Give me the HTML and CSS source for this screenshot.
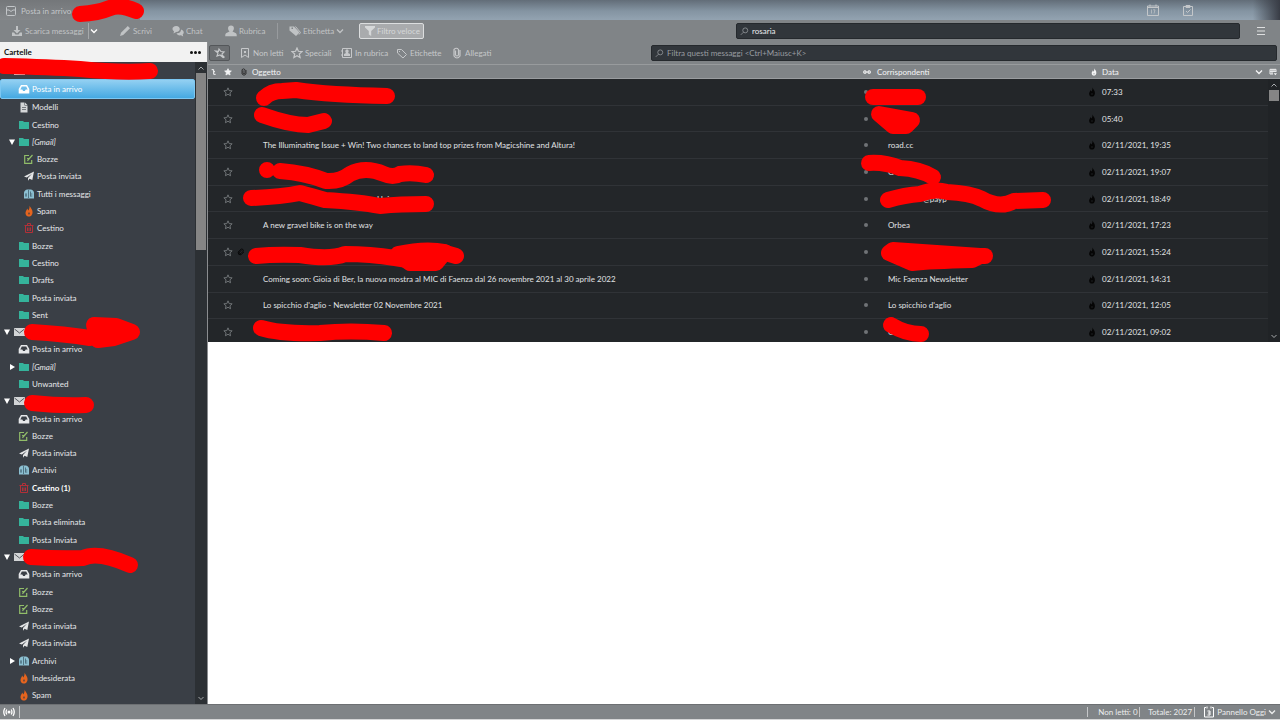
FILE: index.html
```html
<!DOCTYPE html>
<html lang="it">
<head>
<meta charset="utf-8">
<title>Posta in arrivo</title>
<link rel="stylesheet" href="styles.css">
</head>
<body>
<svg class="sprite" aria-hidden="true">
  <symbol id="inbox" viewBox="0 0 12 12"><path fill="currentColor" fill-rule="evenodd" d="M3 2h6l2.300 4v4.500H.7V6zM3.800 3.500 2.300 6.500h2l.8 1.500h1.800l.8-1.500h2L8.200 3.500z"/></symbol>
  <symbol id="tabinbox" viewBox="0 0 12 12"><path fill="none" stroke="currentColor" d="M2.500 1.500h7a1 1 0 0 1 1 1v7a1 1 0 0 1-1 1h-7a1 1 0 0 1-1-1v-7a1 1 0 0 1 1-1zM1.500 5h2.500q2 3 4 0h2.500"/></symbol>
  <symbol id="folder" viewBox="0 0 12 12"><path fill="#35b39b" d="M1 2h4l1 1h5v7H1z"/></symbol>
  <symbol id="doc" viewBox="0 0 12 12"><path fill="#d4d6d8" d="M2.500 1.500h4v3h3v7h-7zM7 1.500 9.500 4H7z"/><path stroke="#777b80" d="M4 6.500h4M4 8.500h4"/></symbol>
  <symbol id="draft" viewBox="0 0 12 12"><path fill="none" stroke="#91bd69" stroke-width="1.200" d="M6 2.500H1.700v7.800h7V7M9.500 2 5.500 6.500 4.300 5.200M5.500 6.500 4.500 8"/></symbol>
  <symbol id="sent" viewBox="0 0 12 12"><path fill="#e5e6e7" d="M11 1.500 9.300 10 6.500 8.700 5 10.700V8L9 3.700 3.800 7.500 1 6.500z"/></symbol>
  <symbol id="archive" viewBox="0 0 12 12"><path fill="#8cc0d2" d="M1 10.500V5Q1 2.500 4 1.500h4q3 1 3 3.500v5.500z"/><path fill="none" stroke="#42616e" stroke-width=".8" d="M5.500 2v8M7.500 3.500v5M3 5v4M7.500 6h1.800M7.500 8h1.800M2 7h2"/></symbol>
  <symbol id="flame" viewBox="0 0 12 12"><path fill="currentColor" fill-rule="evenodd" d="M6.500.5C7.500 3 10 4.500 9.500 8 9 11 7 11.500 6 11.500S2.500 11 2.500 8C2.500 6 4 5 4.200 3.500L5.300 5.500C6.500 4 6.700 2 6.500.5zM6 7Q4.500 8.500 6 10 7.500 8.500 6 7z"/></symbol>
  <symbol id="trash" viewBox="0 0 12 12"><path fill="none" stroke="#b23038" d="M1.500 3.500h9M4.500 3V1.500h3V3M2.500 4v6.500h7V4M4.500 5.500V9M6 5.500V9M7.500 5.500V9"/></symbol>
  <symbol id="mail" viewBox="0 0 12 12"><path fill="#d2d4d6" d="M1 2h11v8H1z"/><path fill="none" stroke="#555a60" d="M1.500 3 6.500 7l5-4"/></symbol>
  <symbol id="down" viewBox="0 0 8 8"><path fill="#fff" d="M1 1.500h6L4 7z"/></symbol>
  <symbol id="right" viewBox="0 0 8 8"><path fill="#fff" d="M2 1v6l5-3z"/></symbol>
  <symbol id="chev" viewBox="0 0 8 8"><path fill="none" stroke="currentColor" stroke-width="1.300" d="m1 2.500 3 3 3-3"/></symbol>
  <symbol id="chevthin" viewBox="0 0 8 8"><path fill="none" stroke="currentColor" d="m1.500 3 2.500 2.500L6.500 3"/></symbol>
  <symbol id="chevup" viewBox="0 0 8 8"><path fill="none" stroke="currentColor" d="M1.500 5.500 4 3l2.500 2.500"/></symbol>
  <symbol id="download" viewBox="0 0 12 12"><path fill="currentColor" d="M5 1h2v4h2.500L6 8.500 2.500 5H5zM1 7.500h2l1.500 2h3l1.500-2h2V11H1z"/></symbol>
  <symbol id="pencil" viewBox="0 0 12 12"><path fill="currentColor" d="m1 11 1-3.200L8.800 1 11 3.200 4.200 10z"/></symbol>
  <symbol id="chat" viewBox="0 0 12 12"><path fill="currentColor" d="M4.200 1C9 1 9 7 4.200 7L1.500 8.500 2 6.300C-.8 4.500.5 1 4.200 1z"/><path fill="currentColor" d="M9 4.500c3 .8 3.500 3.500 1.700 5l.5 2L9 10.300c-2.500.4-4-.6-4.500-2C7.500 8.500 9 7 9 4.500z"/></symbol>
  <symbol id="person" viewBox="0 0 12 12"><path fill="currentColor" d="M6 .5c4 0 3.200 4.500 1.500 6L11 8.200q.8.500.8 3H.2q0-2.500.8-3l3.500-1.700C2.800 5 2 .5 6 .5z"/></symbol>
  <symbol id="tag" viewBox="0 0 12 12"><path fill="currentColor" fill-rule="evenodd" d="M.5 1.500H5l5.500 6L7 11 .5 5.500zM2.500 2.500v1.500H4V2.500z"/><path fill="none" stroke="currentColor" d="m6.500 1.500 5 6-1.500 2"/></symbol>
  <symbol id="tago" viewBox="0 0 12 12"><path fill="none" stroke="currentColor" d="M1.500 2.500h4l5 5-3.500 3.500-5.500-5zM3.500 4v1"/></symbol>
  <symbol id="funnel" viewBox="0 0 12 12"><path fill="currentColor" d="M1 1h10v1.500L7.200 6v5L4.800 9.500V6L1 2.500z"/></symbol>
  <symbol id="search" viewBox="0 0 12 12"><circle cx="7" cy="4.500" r="3.300" fill="none" stroke="currentColor"/><path stroke="currentColor" d="M4.500 7 1 10.500"/></symbol>
  <symbol id="star" viewBox="0 0 12 12"><path stroke="currentColor" stroke-width="1.200" d="m6 1 1.400 3.300 3.600.3-2.700 2.400.8 3.500L6 8.700l-3.100 1.800.8-3.500L1 4.600l3.600-.3z"/></symbol>
  <symbol id="pin" viewBox="0 0 12 12"><path fill="none" stroke="currentColor" stroke-width="1.200" d="M5 2 7 4.500l3 .5-2 2 .5 3L6 8 3 9l1-3-2.500-2 3 .3zM7.500 7.500l3 3"/></symbol>
  <symbol id="unread" viewBox="0 0 12 12"><path fill="none" stroke="currentColor" d="M2.500 1.500h7v9L6 8l-3.500 2.500z"/><path fill="currentColor" d="M5 4h2v2H5z"/></symbol>
  <symbol id="book" viewBox="0 0 12 12"><path fill="none" stroke="currentColor" d="M1.500 1.500h9v9h-9zM0 4h2M0 8h2"/><path fill="currentColor" d="M6 2.500c2 0 2 2.500 1 3.500l2 1v2H3V7l2-1C4 5 4 2.500 6 2.500z"/></symbol>
  <symbol id="clip" viewBox="0 0 12 12"><path fill="none" stroke="currentColor" stroke-width="1.200" d="M4.500 3.500V8q1.500 2 3 0V2.500q-2-2.500-4.500 0V9q3 4 6 0V3"/></symbol>
  <symbol id="glasses" viewBox="0 0 12 12"><path fill="none" stroke="currentColor" stroke-width="1.600" d="M2.800 4.200a1.800 1.800 0 1 0 .1 0zM9.200 4.200a1.800 1.800 0 1 0 .1 0zM4.500 6h3"/></symbol>
  <symbol id="thread" viewBox="0 0 12 12"><path fill="none" stroke="currentColor" stroke-width="1.500" d="M1 2.500h3v7h3M4 5.500h2"/></symbol>
  <symbol id="columns" viewBox="0 0 12 12"><path fill="none" stroke="currentColor" stroke-width="1.400" d="M10.500 6V2h-9v7H6M1.500 5h9M4.500 2v7M7.500 2v4"/><path fill="currentColor" d="M7 8h5l-2.500 3z"/></symbol>
  <symbol id="calendar" viewBox="0 0 12 12"><path fill="none" stroke="currentColor" d="M.5 2h11v9.500H.5zM.5 3.500h11M3 .5v2M9 .5v2"/><path fill="none" stroke="currentColor" stroke-width=".7" d="M4.500 5.500v4M6 5.800h2l-1 3.700"/></symbol>
  <symbol id="tasks" viewBox="0 0 12 12"><path fill="none" stroke="currentColor" d="M1.500 2.500h9v9h-9zM4 1.500h4v2H4zM4 7l1.500 1.500L8.500 5.500"/></symbol>
  <symbol id="menu" viewBox="0 0 12 12"><path stroke="currentColor" stroke-width="1.200" d="M2 2.500h8M2 6h8M2 9.500h8"/></symbol>
  <symbol id="signal" viewBox="0 0 12 12"><circle cx="6" cy="6" r="1.500" fill="#fff"/><path fill="none" stroke="#fff" stroke-width="1.300" d="M3.800 3.500q-1.500 2.500 0 5M8.200 3.500q1.500 2.500 0 5M2 2q-2.500 4 0 8M10 2q2.500 4 0 8"/></symbol>
  <symbol id="today" viewBox="0 0 12 12"><path fill="none" stroke="#fff" d="M3 1.500H1.500v9.500h9V1.500H9M4 .5v2M8 .5v2M4.500 5H7v4H4.500M5 7h2"/></symbol>
</svg>

<div class="app">
  <nav class="tabs">
    <button class="tab"><svg class="i"><use href="#tabinbox"/></svg>Posta in arrivo</button>
    <button class="tabicon" aria-label="Calendario"><svg class="i"><use href="#calendar"/></svg></button>
    <button class="tabicon" aria-label="Attività"><svg class="i"><use href="#tasks"/></svg></button>
  </nav>

  <header class="toolbar">
    <button class="tool w-get"><svg class="i"><use href="#download"/></svg>Scarica messaggi</button>
    <button class="tool more" aria-label="Opzioni"><svg class="s"><use href="#chev"/></svg></button>
    <button class="tool w-short"><svg class="i"><use href="#pencil"/></svg>Scrivi</button>
    <button class="tool w-short"><svg class="i"><use href="#chat"/></svg>Chat</button>
    <button class="tool w-book"><svg class="i"><use href="#person"/></svg>Rubrica</button>
    <button class="tool w-tag"><svg class="i"><use href="#tag"/></svg>Etichetta<svg class="s"><use href="#chev"/></svg></button>
    <button class="tool pressed"><svg class="i"><use href="#funnel"/></svg>Filtro veloce</button>
    <label class="field global"><svg class="i"><use href="#search"/></svg><input type="text" value="rosaria" aria-label="Cerca"></label>
    <button class="tool menu" aria-label="Menu"><svg class="i"><use href="#menu"/></svg></button>
  </header>

  <div class="body">
    <aside class="side">
      <div class="sidehead">Cartelle<button class="dots" aria-label="Opzioni cartelle"><i></i><i></i><i></i></button></div>
      <div class="sidebody">
        <ul class="tree">
          <li class="acc"><svg class="s"></svg><svg class="i"><use href="#mail"/></svg></li>
          <li class="sel"><svg class="i"><use href="#inbox"/></svg>Posta in arrivo</li>
          <li><svg class="i"><use href="#doc"/></svg>Modelli</li>
          <li><svg class="i"><use href="#folder"/></svg>Cestino</li>
          <li class="open it"><svg class="s"><use href="#down"/></svg><svg class="i"><use href="#folder"/></svg>[Gmail]</li>
          <li class="sub"><svg class="i"><use href="#draft"/></svg>Bozze</li>
          <li class="sub"><svg class="i"><use href="#sent"/></svg>Posta inviata</li>
          <li class="sub"><svg class="i"><use href="#archive"/></svg>Tutti i messaggi</li>
          <li class="sub"><svg class="i spam"><use href="#flame"/></svg>Spam</li>
          <li class="sub"><svg class="i"><use href="#trash"/></svg>Cestino</li>
          <li><svg class="i"><use href="#folder"/></svg>Bozze</li>
          <li><svg class="i"><use href="#folder"/></svg>Cestino</li>
          <li><svg class="i"><use href="#folder"/></svg>Drafts</li>
          <li><svg class="i"><use href="#folder"/></svg>Posta inviata</li>
          <li><svg class="i"><use href="#folder"/></svg>Sent</li>
          <li class="acc"><svg class="s"><use href="#down"/></svg><svg class="i"><use href="#mail"/></svg></li>
          <li><svg class="i"><use href="#inbox"/></svg>Posta in arrivo</li>
          <li class="open it"><svg class="s"><use href="#right"/></svg><svg class="i"><use href="#folder"/></svg>[Gmail]</li>
          <li><svg class="i"><use href="#folder"/></svg>Unwanted</li>
          <li class="acc"><svg class="s"><use href="#down"/></svg><svg class="i"><use href="#mail"/></svg></li>
          <li><svg class="i"><use href="#inbox"/></svg>Posta in arrivo</li>
          <li><svg class="i"><use href="#draft"/></svg>Bozze</li>
          <li><svg class="i"><use href="#sent"/></svg>Posta inviata</li>
          <li><svg class="i"><use href="#archive"/></svg>Archivi</li>
          <li class="new"><svg class="i"><use href="#trash"/></svg>Cestino (1)</li>
          <li><svg class="i"><use href="#folder"/></svg>Bozze</li>
          <li><svg class="i"><use href="#folder"/></svg>Posta eliminata</li>
          <li><svg class="i"><use href="#folder"/></svg>Posta Inviata</li>
          <li class="acc"><svg class="s"><use href="#down"/></svg><svg class="i"><use href="#mail"/></svg></li>
          <li><svg class="i"><use href="#inbox"/></svg>Posta in arrivo</li>
          <li><svg class="i"><use href="#draft"/></svg>Bozze</li>
          <li><svg class="i"><use href="#draft"/></svg>Bozze</li>
          <li><svg class="i"><use href="#sent"/></svg>Posta inviata</li>
          <li><svg class="i"><use href="#sent"/></svg>Posta inviata</li>
          <li class="open"><svg class="s"><use href="#right"/></svg><svg class="i"><use href="#archive"/></svg>Archivi</li>
          <li><svg class="i spam"><use href="#flame"/></svg>Indesiderata</li>
          <li><svg class="i spam"><use href="#flame"/></svg>Spam</li>
        </ul>
        <div class="scroll"><svg class="s"><use href="#chevup"/></svg><div class="thumb"></div><svg class="s end"><use href="#chevthin"/></svg></div>
      </div>
    </aside>

    <main class="main">
      <div class="filter">
        <button class="pin" aria-label="Mantieni filtro"><svg class="i"><use href="#pin"/></svg></button>
        <button class="tool f1"><svg class="i"><use href="#unread"/></svg>Non letti</button>
        <button class="tool f2"><svg class="i" fill="none"><use href="#star"/></svg>Speciali</button>
        <button class="tool f3"><svg class="i"><use href="#book"/></svg>In rubrica</button>
        <button class="tool f3"><svg class="i"><use href="#tago"/></svg>Etichette</button>
        <button class="tool f4"><svg class="i"><use href="#clip"/></svg>Allegati</button>
        <label class="field quick"><svg class="i"><use href="#search"/></svg><input type="text" placeholder="Filtra questi messaggi &lt;Ctrl+Maiusc+K&gt;" aria-label="Filtra questi messaggi"></label>
      </div>
      <div class="list">
        <table class="mails">
          <colgroup><col class="c1"><col class="c2"><col class="c3"><col><col class="c5"><col class="c6"><col class="c7"><col class="c8"><col class="c9"></colgroup>
          <thead><tr>
            <th><svg class="s"><use href="#thread"/></svg></th><th><svg class="s" fill="currentColor"><use href="#star"/></svg></th><th><svg class="s dark"><use href="#clip"/></svg></th><th class="h-subj">Oggetto</th>
            <th><svg class="s"><use href="#glasses"/></svg></th><th class="h-who">Corrispondenti</th><th><svg class="s"><use href="#flame"/></svg></th><th>Data</th><th><span class="ends"><svg class="s"><use href="#chev"/></svg><svg class="s"><use href="#columns"/></svg></span></th>
          </tr></thead>
          <tbody>
            <tr><td></td><td><svg class="st"><use href="#star"/></svg></td><td></td><td></td><td><i class="dot"></i></td><td></td><td><svg class="fl"><use href="#flame"/></svg></td><td colspan="2">07:33</td></tr>
            <tr><td></td><td><svg class="st"><use href="#star"/></svg></td><td></td><td></td><td><i class="dot"></i></td><td></td><td><svg class="fl"><use href="#flame"/></svg></td><td colspan="2">05:40</td></tr>
            <tr><td></td><td><svg class="st"><use href="#star"/></svg></td><td></td><td>The Illuminating Issue + Win! Two chances to land top prizes from Magicshine and Altura!</td><td><i class="dot"></i></td><td>road.cc</td><td><svg class="fl"><use href="#flame"/></svg></td><td colspan="2">02/11/2021, 19:35</td></tr>
            <tr><td></td><td><svg class="st"><use href="#star"/></svg></td><td></td><td></td><td><i class="dot"></i></td><td>G</td><td><svg class="fl"><use href="#flame"/></svg></td><td colspan="2">02/11/2021, 19:07</td></tr>
            <tr><td></td><td><svg class="st"><use href="#star"/></svg></td><td></td><td class="p-subj">a Uni</td><td><i class="dot"></i></td><td class="p-who">@payp</td><td><svg class="fl"><use href="#flame"/></svg></td><td colspan="2">02/11/2021, 18:49</td></tr>
            <tr><td></td><td><svg class="st"><use href="#star"/></svg></td><td></td><td>A new gravel bike is on the way</td><td><i class="dot"></i></td><td>Orbea</td><td><svg class="fl"><use href="#flame"/></svg></td><td colspan="2">02/11/2021, 17:23</td></tr>
            <tr><td></td><td><svg class="st"><use href="#star"/></svg></td><td><svg class="s att"><use href="#clip"/></svg></td><td></td><td><i class="dot"></i></td><td></td><td><svg class="fl"><use href="#flame"/></svg></td><td colspan="2">02/11/2021, 15:24</td></tr>
            <tr><td></td><td><svg class="st"><use href="#star"/></svg></td><td></td><td>Coming soon: Gioia di Ber, la nuova mostra al MIC di Faenza dal 26 novembre 2021 al 30 aprile 2022</td><td><i class="dot"></i></td><td>Mic Faenza Newsletter</td><td><svg class="fl"><use href="#flame"/></svg></td><td colspan="2">02/11/2021, 14:31</td></tr>
            <tr><td></td><td><svg class="st"><use href="#star"/></svg></td><td></td><td>Lo spicchio d'aglio - Newsletter 02 Novembre 2021</td><td><i class="dot"></i></td><td>Lo spicchio d'aglio</td><td><svg class="fl"><use href="#flame"/></svg></td><td colspan="2">02/11/2021, 12:05</td></tr>
            <tr><td></td><td><svg class="st"><use href="#star"/></svg></td><td></td><td></td><td><i class="dot"></i></td><td>G</td><td><svg class="fl"><use href="#flame"/></svg></td><td colspan="2">02/11/2021, 09:02</td></tr>
          </tbody>
        </table>
        <div class="scroll lscroll"><svg class="s"><use href="#chevup"/></svg><div class="thumb"></div><svg class="s end"><use href="#chevthin"/></svg></div>
      </div>
      <div class="preview"></div>
    </main>
  </div>

  <footer class="status">
    <span class="online"><svg class="i"><use href="#signal"/></svg></span>
    <span class="count n1">Non letti: 0</span><span class="count n2">Totale: 2027</span>
    <button class="today"><svg class="i"><use href="#today"/></svg>Pannello Oggi<svg class="s"><use href="#chev"/></svg></button>
  </footer>
</div>

<svg class="marks" viewBox="0 0 1280 720" aria-hidden="true">
  <g fill="none" stroke="#f00" stroke-width="16" stroke-linecap="round" stroke-linejoin="round">
    <path d="M80 14Q98 13 110 8Q120 4 136 11"/>
    <path d="M4 66Q50 67 80 69Q120 73 150 71"/>
    <path d="M264 98Q271 91 282 91L296 90Q330 95 387 96"/>
    <path d="M262 115Q290 125 308 125L324 121"/>
    <path d="M267 170h0M280 171Q306 173 326 181Q340 182 350 174Q365 166 384 174Q393 178 400 174Q412 172 426 175"/>
    <path d="M251 198Q280 197 300 193Q315 197 325 200Q360 202 380 206Q400 204 426 204"/>
    <path d="M256 256Q275 254 300 255Q330 260 345 254Q370 254 395 258L420 262L442 252L456 256"/>
    <path fill="#f00" d="M398 254Q425 248 445 252L436 263H410z"/>
    <path d="M261 328Q280 334 320 333Q350 330 384 333"/>
    <path d="M873 97H918"/>
    <path fill="#f00" d="M879 114 912 120 906 126 893 126z"/>
    <path d="M869 163Q885 162 900 168Q920 169 933 177"/>
    <path d="M888 200Q905 195 920 194Q935 188 947 192Q970 193 982 199Q1000 209 1014 201L1043 200"/>
    <path fill="#f00" d="M889 253 893 250 980 256 972 260Q930 261 912 263z"/><path d="M975 256h10"/>
    <path d="M891 325Q906 334 921 334"/>
    <path d="M32 332Q65 334 90 338L100 328"/><path fill="#f00" d="M94 325 116 326 132 332 114 338 98 340z"/>
    <path d="M32 403Q60 406 86 405"/>
    <path d="M31 557Q60 559 83 558Q98 551 130 565"/>
  </g>
</svg>
</body>
</html>
```
FILE: styles.css
```css
* { box-sizing: border-box; }
body { margin: 0; font-family: Lato, "Noto Sans", sans-serif; font-size: 8px; line-height: 12px; color: #e6e8ea; }
button, input { font: inherit; color: inherit; border: 0; background: none; padding: 0; margin: 0; }
ul { margin: 0; padding: 0; list-style: none; }
.sprite { display: none; }
.i { width: 12px; height: 12px; flex: none; }
.s { width: 8px; height: 8px; flex: none; display: block; }
.app { display: flex; flex-direction: column; height: 100vh; background: #808487; }

.tabs { display: flex; height: 20px; flex: none; background: linear-gradient(90deg, transparent 92%, #383c45 100%) right / 340px no-repeat, linear-gradient(#626d78, #8494a2 55%, #93a3b1); color: #c3c6c9; }
.tab { display: flex; align-items: center; gap: 4px; width: 140px; padding: 1px 0 0 5px; margin-right: auto; background: linear-gradient(#74777a, #84878a); }
.tabicon { width: 35px; display: flex; align-items: center; }
.tabicon:last-child { width: 98px; }

.toolbar { display: flex; align-items: center; height: 22px; flex: none; padding: 0 13px 0 11px; color: #c0c3c5; }
.tool { display: flex; align-items: center; gap: 2px; height: 16px; white-space: nowrap; text-align: left; flex: none; }
.w-get { width: 78px; border-right: 1px solid #a5a8aa; }
.more { width: 30px; padding-left: 1px; color: #fff; }
.w-short { width: 53px; }
.w-book { width: 53px; border-right: 1px solid #989b9e; }
.w-tag { width: 81px; padding-left: 11px; gap: 2px; }
.pressed { width: 65px; padding-left: 4px; gap: 1px; background: #a9abad; border: 1px solid #dcdedf; border-radius: 2px; color: #d6d8d9; }
.field { display: flex; align-items: center; gap: 3px; height: 16px; padding: 0 3px; background: #31363b; border: 1px solid #25292d; border-radius: 2px; color: #999da1; }
.field .i { width: 9px; height: 9px; }
.field input { flex: 1; min-width: 0; outline: 0; color: #eceef0; }
.field input::placeholder { color: #999da1; opacity: 1; }
.global { width: 504px; margin-left: auto; }
.menu { width: 27px; padding-left: 15px; color: #dedfe0; }

.body { display: flex; flex: 1; min-height: 0; }
.side { width: 208px; flex: none; display: flex; flex-direction: column; background: #3a3f46; border-right: 1px solid #8b8d90; }
.sidehead { display: flex; align-items: center; justify-content: space-between; height: 20px; flex: none; padding: 0 6px 0 4px; background: #f2f2f2; color: #111; font-weight: 700; }
.dots { display: flex; gap: 1px; }
.dots i { width: 3px; height: 3px; border-radius: 50%; background: #111; }
.sidebody { display: flex; flex: 1; min-height: 0; }
.tree { flex: 1; display: flex; flex-direction: column; }
.tree li { flex: 1; min-height: 0; display: flex; align-items: center; gap: 2px; padding-left: 18px; border-radius: 2px; white-space: nowrap; }
.tree .sub { padding-left: 23px; }
.tree .open { padding-left: 8px; }
.tree .acc { padding-left: 3px; }
.tree .it { font-style: italic; }
.tree .new { font-weight: 700; color: #fff; }
.tree .sel { background: linear-gradient(#93d0f2, #45a9e2); border: 1px solid #7cc7f2; padding-left: 17px; color: #fff; }
.spam { color: #e5641e; }
.scroll { width: 12px; flex: none; display: flex; flex-direction: column; align-items: center; background: #2c3034; color: #a7aaac; padding: 2px 0; }
.thumb { width: 10px; height: 177px; margin-top: 1px; background: #858585; }
.end { margin-top: auto; }

.main { flex: 1; min-width: 0; display: flex; flex-direction: column; background: #808487; }
.filter { display: flex; align-items: center; height: 22px; flex: none; padding: 0 3px 0 1px; color: #c6c8ca; }
.pin { width: 21px; height: 16px; display: flex; align-items: center; justify-content: center; background: #6c6f72; border: 1px solid #54575a; border-radius: 2px; margin-right: 9px; }
.f1 { width: 52px; }
.f2 { width: 50px; }
.f3 { width: 55px; }
.f4 { width: 60px; }
.quick { flex: 1; margin-left: 140px; }
.list { display: flex; height: 278px; flex: none; overflow: hidden; position: relative; background: #232629; }
.mails { width: 100%; height: 282px; border-collapse: collapse; table-layout: fixed; color: #e0e2e4; flex: none; }
.c1 { width: 13px; } .c2 { width: 16px; } .c3 { width: 26px; } .c5 { width: 25px; } .c6 { width: 199px; } .c7 { width: 15px; } .c8 { width: 153px; } .c9 { width: 25px; }
th, td { padding: 0; text-align: left; font-weight: 400; white-space: nowrap; vertical-align: middle; }
th { height: 14px; background: #808487; border-top: 1px solid #989b9d; border-bottom: 1px solid #9a9da0; color: #f4f5f6; }
th:first-child, .mails th:nth-child(2), .mails th:nth-child(3), .mails th:nth-child(7) { padding-left: 3px; }
.h-subj, .h-who { text-indent: -11px; }
.ends { display: flex; gap: 6px; }
.dark { color: #222; }
tbody tr { border-bottom: 1px solid #303337; }
.st { width: 10px; height: 10px; display: block; margin-left: 2px; fill: none; color: #6f7376; }
.dot { display: block; width: 4px; height: 4px; border-radius: 50%; background: #707376; margin-left: 1px; }
.fl { display: block; width: 10px; height: 10px; color: #050505; }
.att { color: #050505; transform: rotate(45deg); }
.p-subj { padding-left: 108px; }
.p-who { padding-left: 35px; }
.lscroll { position: absolute; right: 0; top: 15px; bottom: 0; background: #202326; }
.lscroll .thumb { height: 11px; }
.preview { flex: 1; background: #fff; }

.status { display: flex; align-items: center; height: 16px; flex: none; padding: 0 4px 0 3px; border-top: 1px solid #6d7073; border-bottom: 1px solid #d5d6d7; color: #eceded; white-space: nowrap; }
.online { display: flex; width: 17px; border-right: 1px solid #c5c7c9; }
.count { border-right: 1px solid #c5c7c9; line-height: 10px; }
.n1 { margin-left: auto; width: 53px; border-left: 1px solid #c5c7c9; padding-left: 10px; }
.n2 { width: 55px; padding-left: 8px; }
.today { display: flex; align-items: center; gap: 2px; margin-left: 8px; }
.marks { position: absolute; left: 0; top: 0; width: 1280px; height: 720px; pointer-events: none; }
```
